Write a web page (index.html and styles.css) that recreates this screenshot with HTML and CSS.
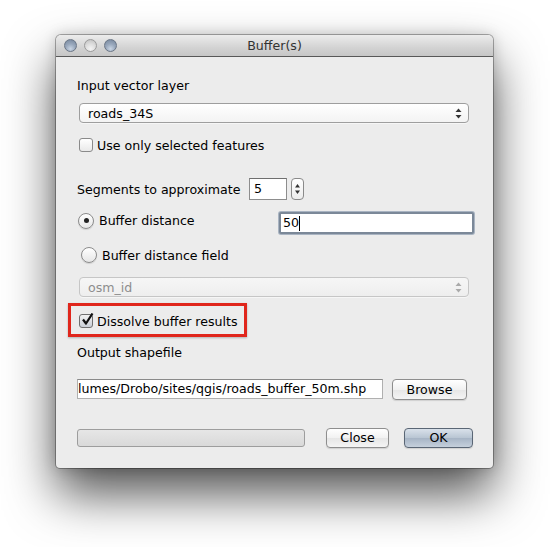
FILE: index.html
```html
<!DOCTYPE html>
<html>
<head>
<meta charset="utf-8">
<link rel="stylesheet" href="styles.css">
</head>
<body>
<div class="window">
  <div class="titlebar">
    <div class="lights">
      <span class="light blue"></span>
      <span class="light gray"></span>
      <span class="light blue"></span>
    </div>
    <div class="title">Buffer(s)</div>
  </div>
  <div class="content">
    <div class="label first-label">Input vector layer</div>
    <div class="combo layer-combo">
      <span class="combo-text">roads_34S</span>
      <svg class="updown" width="7" height="11" viewBox="0 0 7 11"><path d="M3.5 0.5 L6.5 4 L0.5 4 Z" fill="#333"/><path d="M3.5 10.5 L6.5 7 L0.5 7 Z" fill="#333"/></svg>
    </div>
    <div class="check-row">
      <span class="box"></span>
      <span>Use only selected features</span>
    </div>
    <div class="seg-row">
      <span class="seg-label">Segments to approximate</span>
      <div class="spin">5</div>
      <div class="stepper">
        <svg width="13" height="22" viewBox="0 0 13 22"><path d="M6.5 6 L9 9.5 L4 9.5 Z" fill="#333"/><path d="M6.5 16 L9 12.5 L4 12.5 Z" fill="#333"/></svg>
      </div>
    </div>
    <div class="dist-row">
      <span class="radio on"><span class="dot"></span></span>
      <span class="dist-label">Buffer distance</span>
      <div class="line focus">50<span class="caret"></span></div>
    </div>
    <div class="field-row">
      <span class="radio"></span>
      <span class="field-label">Buffer distance field</span>
    </div>
    <div class="combo disabled">
      <span class="combo-text">osm_id</span>
      <svg class="updown" width="7" height="11" viewBox="0 0 7 11"><path d="M3.5 0.5 L6.5 4 L0.5 4 Z" fill="#aaa"/><path d="M3.5 10.5 L6.5 7 L0.5 7 Z" fill="#aaa"/></svg>
    </div>
    <div class="highlight">
      <span class="box checked">
        <svg width="14" height="14" viewBox="0 0 14 14"><path d="M3 6.5 L6 10.5 L12.5 0.5" fill="none" stroke="#111" stroke-width="2.2" stroke-linejoin="round"/></svg>
      </span>
      <span>Dissolve buffer results</span>
    </div>
    <div class="label out-label">Output shapefile</div>
    <div class="out-row">
      <div class="line out">lumes/Drobo/sites/qgis/roads_buffer_50m.shp</div>
      <div class="btn browse">Browse</div>
    </div>
    <div class="bottom-row">
      <div class="progress"></div>
      <div class="btn close">Close</div>
      <div class="btn ok">OK</div>
    </div>
  </div>
</div>
</body>
</html>
```

FILE: styles.css
```css
html, body {
  margin: 0;
  padding: 0;
  background: #ffffff;
}
body {
  width: 550px;
  height: 547px;
  overflow: hidden;
  font-family: "DejaVu Sans", "Lucida Grande", sans-serif;
  font-size: 12.6px;
  color: #000;
}
.window {
  margin: 35px 0 0 56px;
  width: 437px;
  height: 433px;
  border-radius: 5px 5px 4px 4px;
  background: #ececec;
  box-shadow: 0 0 0 1px rgba(0,0,0,0.3), 0 0 14px rgba(0,0,0,0.18), 0 26px 50px rgba(0,0,0,0.68);
  display: flex;
  flex-direction: column;
  overflow: hidden;
}
.titlebar {
  height: 21px;
  flex: 0 0 21px;
  border-bottom: 1px solid #585858;
  background: linear-gradient(#ececec, #d3d3d3 60%, #c6c6c6);
  display: flex;
  align-items: center;
  position: relative;
  border-radius: 5px 5px 0 0;
}
.lights {
  display: flex;
  gap: 7px;
  margin-left: 8px;
}
.light {
  width: 13px;
  height: 13px;
  border-radius: 50%;
  box-sizing: border-box;
  border: 1px solid #6a7686;
}
.light.blue {
  background: radial-gradient(circle at 50% 80%, #c9d5e4 0%, #9aa9bd 45%, #74859c 100%);
}
.light.gray {
  border-color: #9b9b9b;
  background: radial-gradient(circle at 50% 80%, #f4f4f4 0%, #dcdcdc 50%, #bdbdbd 100%);
}
.title {
  position: absolute;
  left: 0;
  right: 0;
  top: 0;
  bottom: 0;
  text-align: center;
  line-height: 21px;
  color: #333;
}
.content {
  padding: 0 19px 20px 21px;
  display: flex;
  flex-direction: column;
}
.label {
  height: 16px;
  line-height: 16px;
}
.first-label {
  margin-top: 21px;
}
.combo {
  margin-top: 9px;
  margin-left: 2px;
  width: 390px;
  height: 20px;
  box-sizing: border-box;
  border: 1px solid #9e9e9e;
  border-radius: 4px;
  background: linear-gradient(#ffffff, #f3f3f3);
  display: flex;
  align-items: center;
  justify-content: space-between;
  padding: 0 6px 0 8px;
  box-shadow: 0 1px 0 rgba(255,255,255,0.5);
}
.combo.disabled {
  margin-top: 13px;
  border-color: #c6c6c6;
  background: linear-gradient(#f6f6f6, #eeeeee);
  color: #8d8d8d;
}
.updown {
  display: block;
}
.check-row {
  margin-top: 14px;
  margin-left: 2px;
  height: 16px;
  display: flex;
  align-items: center;
  gap: 4px;
}
.box {
  width: 14px;
  height: 14px;
  box-sizing: border-box;
  border: 1px solid #8a8a8a;
  border-radius: 3px;
  background: linear-gradient(#ffffff, #e9e9e9);
  display: block;
  position: relative;
}
.box.checked {
  background: linear-gradient(#f2f2f2, #c9ced6);
  border-color: #6f6f6f;
}
.box.checked svg {
  position: absolute;
  left: 0;
  top: -2px;
}
.seg-row {
  margin-top: 25px;
  height: 22px;
  display: flex;
  align-items: center;
}
.seg-label {
  flex: 0 0 172px;
}
.spin {
  width: 38px;
  height: 22px;
  box-sizing: border-box;
  border: 1px solid #8d8d8d;
  border-top-color: #6f6f6f;
  background: #fff;
  line-height: 20px;
  padding-left: 4px;
}
.stepper {
  margin-left: 4px;
  width: 13px;
  height: 22px;
  box-sizing: border-box;
  border: 1px solid #8a8a8a;
  border-radius: 4px;
  background: linear-gradient(#ffffff, #ececec);
  display: flex;
  align-items: center;
  justify-content: center;
}
.stepper svg {
  display: block;
  margin: -1px;
}
.dist-row {
  margin-top: 12px;
  height: 22px;
  display: flex;
  align-items: center;
}
.radio {
  width: 16px;
  height: 16px;
  box-sizing: border-box;
  border-radius: 50%;
  border: 1px solid #8b8b8b;
  background: linear-gradient(#ffffff, #e6e6e6);
  display: flex;
  align-items: center;
  justify-content: center;
  box-shadow: 0 1px 1px rgba(0,0,0,0.12);
}
.dist-row .radio {
  margin-left: 1px;
  margin-top: -5px;
}
.radio .dot {
  width: 5px;
  height: 5px;
  border-radius: 50%;
  background: #222;
}
.dist-label {
  margin-left: 5px;
  margin-top: -5px;
}
.line {
  box-sizing: border-box;
  background: #fff;
  border: 1px solid #8e8e8e;
  border-top-color: #727272;
}
.line.focus {
  margin-left: auto;
  width: 195px;
  height: 22px;
  border: 2px solid #7b8898;
  border-radius: 2px;
  box-shadow: 0 0 0 1px #a9b4c2;
  line-height: 18px;
  padding-left: 2px;
  display: flex;
  align-items: center;
}
.caret {
  display: inline-block;
  width: 1px;
  height: 15px;
  background: #000;
}
.field-row {
  margin-top: 12px;
  height: 18px;
  display: flex;
  align-items: center;
}
.field-row .radio {
  margin-left: 4px;
}
.field-label {
  margin-left: 5px;
}
.highlight {
  margin-top: 6px;
  margin-left: -9px;
  width: 179px;
  height: 34px;
  box-sizing: border-box;
  border: 3px solid #e0261c;
  display: flex;
  align-items: center;
  padding-left: 8px;
  gap: 4px;
  box-shadow: 0 1px 2px rgba(0,0,0,0.25);
}
.highlight .box {
  margin-top: 2px;
}
.highlight span:last-child {
  margin-top: 2px;
}
.out-label {
  margin-top: 8px;
}
.out-row {
  margin-top: 18px;
  height: 21px;
  display: flex;
  align-items: flex-start;
}
.line.out {
  width: 306px;
  height: 20px;
  line-height: 18px;
  overflow: hidden;
  white-space: nowrap;
  padding-left: 0;
  border-color: #b0b0b0;
  border-top-color: #8a8a8a;
}
.btn {
  box-sizing: border-box;
  height: 21px;
  border: 1px solid #8e8e8e;
  border-radius: 4px;
  background: linear-gradient(#ffffff, #f1f1f1 50%, #e6e6e6 51%, #f4f4f4);
  text-align: center;
  line-height: 19px;
  box-shadow: 0 1px 1px rgba(0,0,0,0.12);
}
.browse {
  margin-left: 9px;
  width: 75px;
}
.bottom-row {
  margin-top: 28px;
  height: 20px;
  display: flex;
  align-items: center;
}
.progress {
  width: 228px;
  height: 18px;
  box-sizing: border-box;
  border: 1px solid #9d9d9d;
  border-radius: 3px;
  background: linear-gradient(#e6e6e6, #d9d9d9);
}
.close {
  margin-left: 21px;
  width: 63px;
  height: 20px;
  line-height: 18px;
}
.ok {
  margin-left: 15px;
  width: 69px;
  height: 20px;
  line-height: 18px;
  border-color: #5a6675;
  background: linear-gradient(#d9e1ea, #b8c5d3 50%, #a6b4c5 51%, #c5d0dc);
}
```
